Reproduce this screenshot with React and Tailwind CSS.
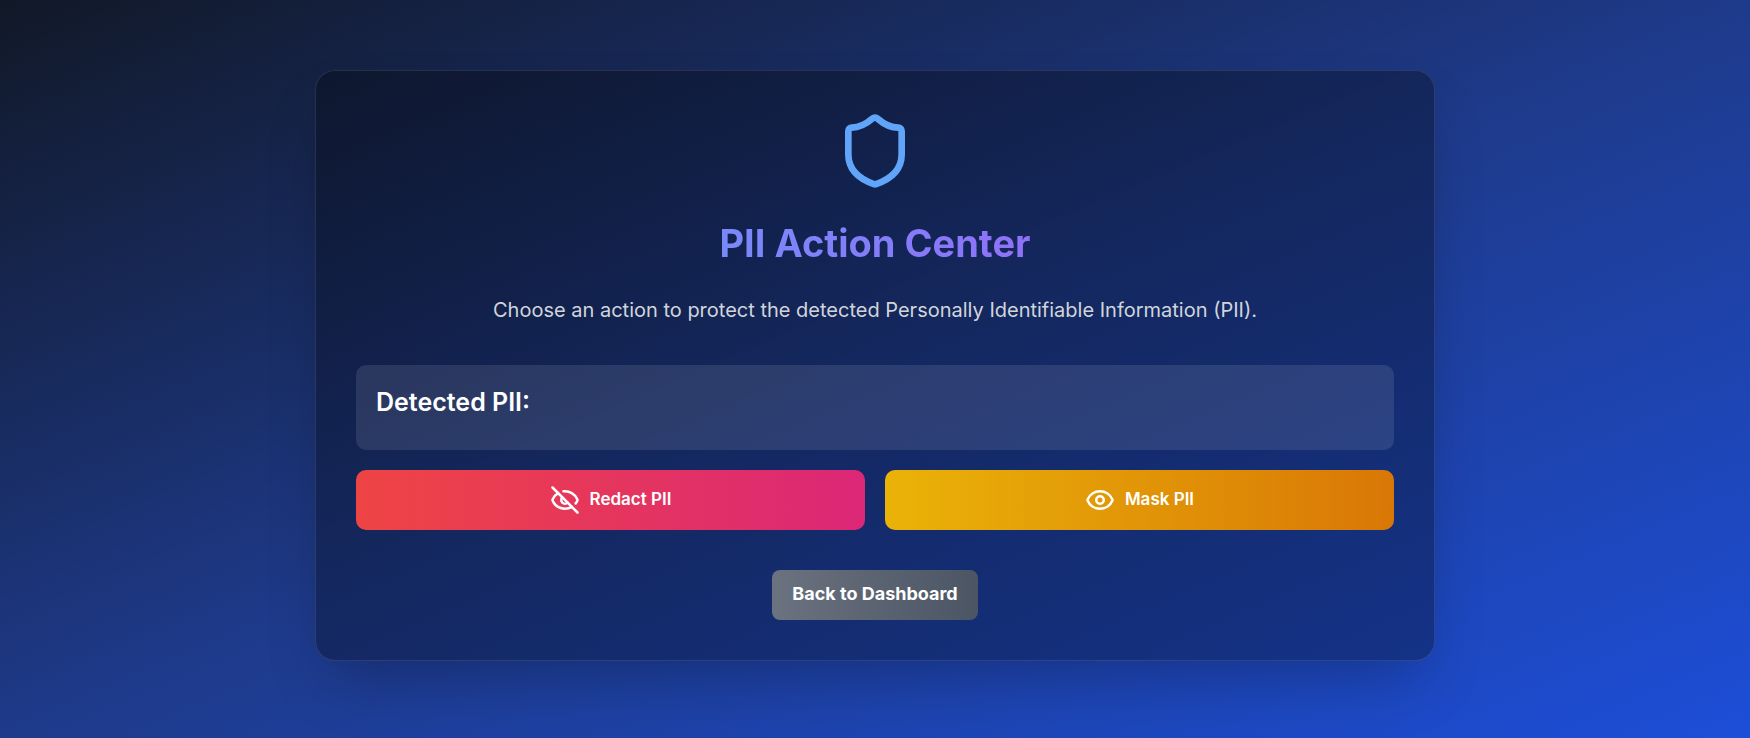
import { Shield, EyeOff, Eye } from "lucide-react";

export default function App() {
  return (
    <div className="flex min-h-screen flex-col items-center justify-center bg-linear-to-br/srgb from-[#111827] via-[#1e3a8a] to-[#1d4ed8] px-6 pt-6 pb-8 font-['Inter','Liberation_Sans',sans-serif] text-white">
      <main className="flex w-full max-w-[1120px] flex-col items-center rounded-[20px] border border-white/10 bg-black/30 p-10 shadow-[0_30px_60px_-15px_rgba(0,0,0,0.25)]">
        <Shield className="size-20 text-[#60a5fa]" />
        <h1 className="mt-[30px] w-full bg-linear-to-r/srgb from-[#60a5fa] to-[#a855f7] bg-clip-text text-center text-[38px] leading-[44px] font-bold text-transparent">
          PII Action Center
        </h1>
        <p className="mt-[30px] text-center text-[20px] leading-[30px] text-[#d1d5db]">
          Choose an action to protect the detected Personally Identifiable Information (PII).
        </p>
        <section className="mt-10 w-full rounded-[10px] bg-white/10 px-5 pt-5 pb-[30px]">
          <h2 className="text-[25px] leading-[35px] font-semibold">Detected PII:</h2>
        </section>
        <div className="mt-5 grid w-full grid-cols-2 gap-5">
          <button
            type="button"
            className="flex h-15 items-center justify-center gap-2.5 rounded-[10px] bg-linear-to-r/srgb from-[#ef4444] to-[#db2777] text-[17px] font-semibold"
          >
            <EyeOff className="size-[30px]" />
            Redact PII
          </button>
          <button
            type="button"
            className="flex h-15 items-center justify-center gap-2.5 rounded-[10px] bg-linear-to-r/srgb from-[#eab308] to-[#d97706] text-[17px] font-semibold"
          >
            <Eye className="size-[30px]" />
            Mask PII
          </button>
        </div>
        <a
          href="#dashboard"
          className="mt-10 rounded-lg bg-linear-to-r/srgb from-[#6b7280] to-[#4b5563] px-5 pt-2.5 pb-3 text-[18px] leading-7 font-bold"
        >
          Back to Dashboard
        </a>
      </main>
    </div>
  );
}
